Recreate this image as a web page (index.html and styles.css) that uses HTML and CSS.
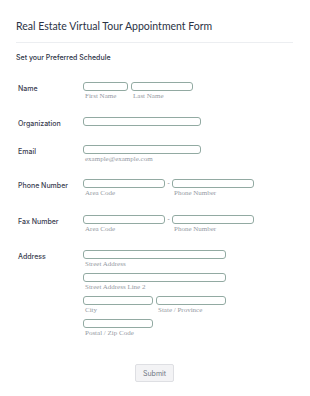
FILE: index.html
```html
<!DOCTYPE html>
<html lang="en">
<head>
    <meta charset="UTF-8">
    <meta name="viewport" content="width=device-width, initial-scale=1.0">
    <title>Real Estate Virtual Tour Appointment Form</title>
    <link rel="stylesheet" href="styles.css">
</head>
<body>
    <form class="form-card">
        <h1 class="form-title">Real Estate Virtual Tour Appointment Form</h1>
        <div class="divider"></div>
        <h2 class="form-subtitle">Set your Preferred Schedule</h2>

        <div class="field first">
            <label class="field-label">Name</label>
            <div class="inputs">
                <div class="pair">
                    <div class="part">
                        <input class="box w-first" type="text">
                        <span class="sub">First Name</span>
                    </div>
                    <div class="part">
                        <input class="box w-last" type="text">
                        <span class="sub">Last Name</span>
                    </div>
                </div>
            </div>
        </div>

        <div class="field">
            <label class="field-label">Organization</label>
            <div class="inputs">
                <input class="box w-med" type="text">
            </div>
        </div>

        <div class="field email">
            <label class="field-label">Email</label>
            <div class="inputs">
                <input class="box w-med" type="text">
                <span class="sub">example@example.com</span>
            </div>
        </div>

        <div class="field phone-field">
            <label class="field-label">Phone Number</label>
            <div class="inputs">
                <div class="pair phone">
                    <div class="part">
                        <input class="box w-phone" type="text">
                        <span class="sub">Area Code</span>
                    </div>
                    <span class="dash">-</span>
                    <div class="part">
                        <input class="box w-phone" type="text">
                        <span class="sub">Phone Number</span>
                    </div>
                </div>
            </div>
        </div>

        <div class="field fax-field">
            <label class="field-label">Fax Number</label>
            <div class="inputs">
                <div class="pair phone">
                    <div class="part">
                        <input class="box w-phone" type="text">
                        <span class="sub">Area Code</span>
                    </div>
                    <span class="dash">-</span>
                    <div class="part">
                        <input class="box w-phone" type="text">
                        <span class="sub">Phone Number</span>
                    </div>
                </div>
            </div>
        </div>

        <div class="field">
            <label class="field-label">Address</label>
            <div class="inputs address">
                <div class="part">
                    <input class="box w-long" type="text">
                    <span class="sub">Street Address</span>
                </div>
                <div class="part">
                    <input class="box w-long" type="text">
                    <span class="sub">Street Address Line 2</span>
                </div>
                <div class="pair">
                    <div class="part">
                        <input class="box w-half" type="text">
                        <span class="sub">City</span>
                    </div>
                    <div class="part">
                        <input class="box w-half" type="text">
                        <span class="sub">State / Province</span>
                    </div>
                </div>
                <div class="part">
                    <input class="box w-half" type="text">
                    <span class="sub">Postal / Zip Code</span>
                </div>
            </div>
        </div>

        <div class="actions">
            <button class="submit" type="button">Submit</button>
        </div>
    </form>
</body>
</html>
```

FILE: styles.css
```css
body {
    margin: 0;
    background-color: #fff;
    font-family: Lato, "Liberation Sans", sans-serif;
    color: #2c3345;
}
.form-card {
    width: 310px;
    height: 396px;
    box-sizing: border-box;
    background-color: #fff;
    padding: 18px 16px 0 16px;
}
.form-title {
    margin: 0;
    font-size: 10.5px;
    font-weight: normal;
    line-height: 16px;
    color: #2c3345;
}
.divider {
    height: 1px;
    background-color: #eceef1;
    margin: 8px 0 0 0;
    width: 277px;
}
.form-subtitle {
    margin: 10px 0 0 0;
    font-family: Inter, "Liberation Sans", sans-serif;
    font-size: 7px;
    font-weight: 500;
    line-height: 10px;
}
.field {
    display: flex;
    margin-top: 16px;
}
.field.first {
    margin-top: 19px;
}
.field.email {
    margin-top: 17px;
}
.field.phone-field {
    margin-top: 15px;
}
.field.fax-field {
    margin-top: 17px;
}
.field-label {
    width: 65px;
    padding-left: 2px;
    padding-top: 2px;
    font-family: Inter, "Liberation Sans", sans-serif;
    font-size: 7px;
    font-weight: 500;
    line-height: 9px;
    color: #3a4050;
}
.inputs {
    display: flex;
    flex-direction: column;
}
.address {
    gap: 4px;
}
.pair {
    display: flex;
    align-items: flex-start;
    gap: 3px;
}
.pair.phone {
    gap: 0;
}
.part {
    display: flex;
    flex-direction: column;
}
.box {
    display: block;
    height: 9px;
    box-sizing: border-box;
    margin: 0;
    padding: 0;
    border: 1px solid #92aaa2;
    border-radius: 3px;
    background-color: #fff;
}
.w-first { width: 45px; }
.w-last { width: 62px; }
.w-med { width: 118px; }
.w-phone { width: 82px; }
.w-long { width: 143px; }
.w-half { width: 70px; }
.sub {
    display: block;
    font-family: "Liberation Serif", "Times New Roman", serif;
    font-size: 7px;
    line-height: 10px;
    padding-left: 2px;
    color: #959aa3;
}
.dash {
    width: 7px;
    text-align: center;
    font-size: 7px;
    line-height: 9px;
    color: #8f949d;
}
.actions {
    display: flex;
    justify-content: center;
    margin-top: 26px;
    padding-right: 1px;
}
.submit {
    width: 39px;
    height: 18px;
    padding: 0;
    border: 1px solid #dedfe3;
    border-radius: 2px;
    background-color: #f3f3f5;
    color: #6f7682;
    font-family: Inter, "Liberation Sans", sans-serif;
    font-size: 7px;
}
```
